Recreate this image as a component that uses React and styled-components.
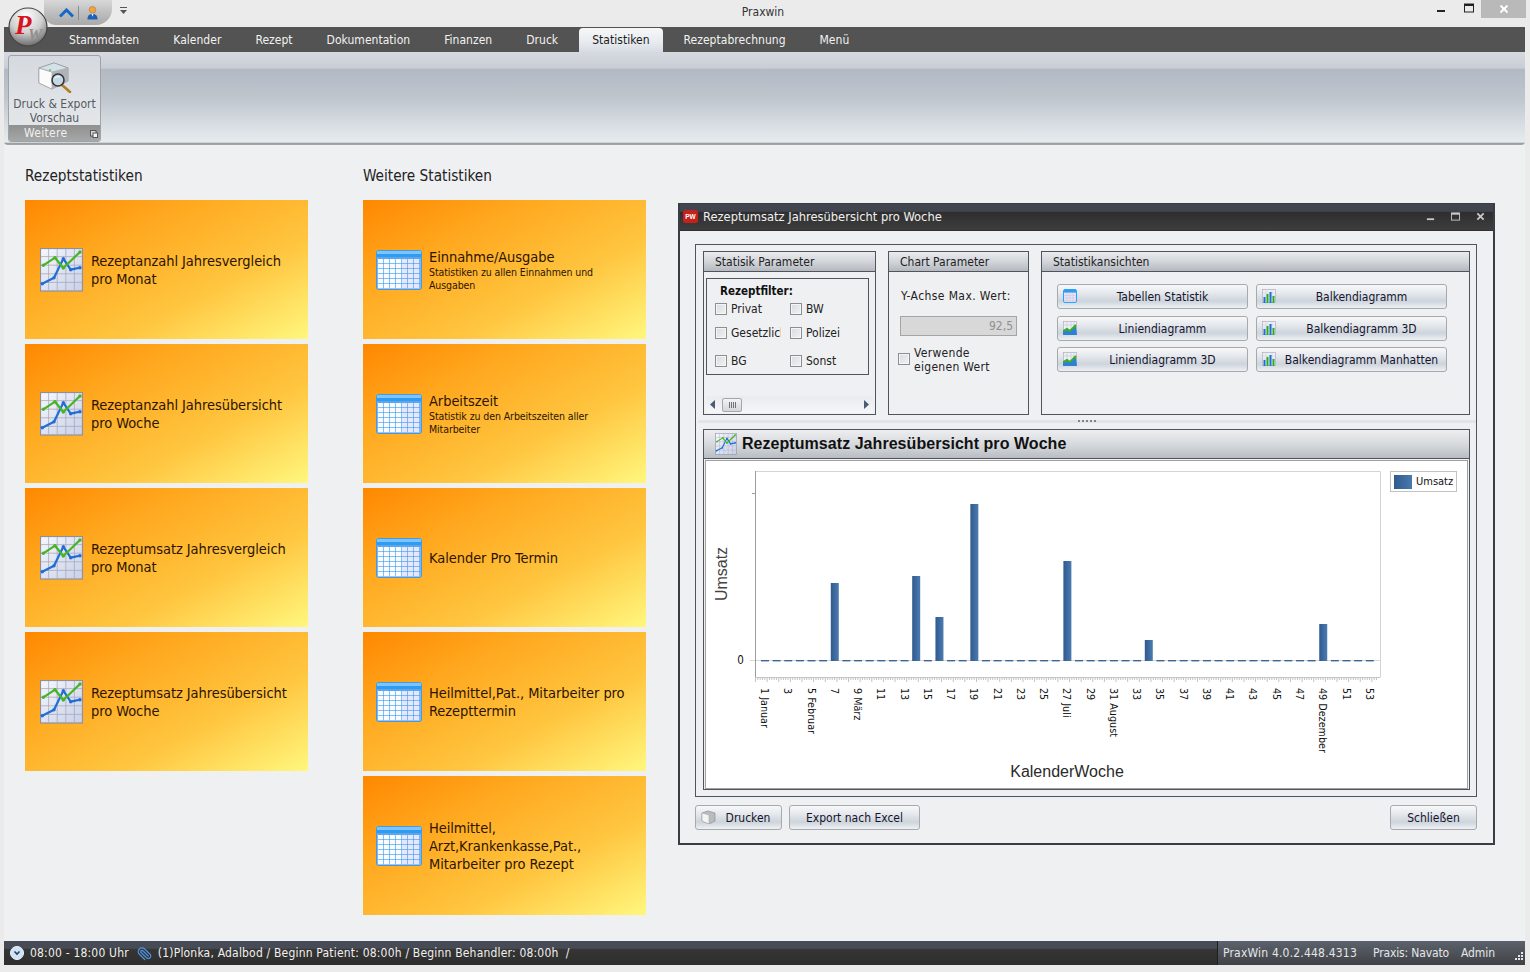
import React from "react";
import styled, { createGlobalStyle } from "styled-components";
import { Paperclip } from "lucide-react";

const GlobalStyle = createGlobalStyle`
  html, body { margin: 0; padding: 0; }
  body {
    font-family: "DejaVu Sans Condensed", "DejaVu Sans", "Noto Sans", sans-serif;
    font-size: 12px;
    color: #1a1a1a;
    background: #ebebeb;
  }
  * { box-sizing: border-box; }
`;

// SHELL

const Shell = styled.div`
  position: relative;
  display: flex;
  flex-direction: column;
  width: 1530px;
  height: 972px;
  overflow: hidden;
  background: #ebebeb;
  padding: 0 5px 7px 4px;
`;

const TitleBar = styled.div`
  display: grid;
  grid-template-columns: 1fr auto 1fr;
  height: 27px;
  margin: 0 -5px 0 -4px;
  background: #ebebeb;
`;

const Orb = styled.div`
  position: absolute;
  left: 8px;
  top: 7px;
  width: 40px;
  height: 40px;
  z-index: 3;
`;

const QuickAccess = styled.div`
  display: flex;
  align-items: flex-start;
  gap: 8px;
  padding-left: 44px;
`;

const QuickPill = styled.div`
  display: flex;
  align-items: center;
  gap: 4px;
  width: 68px;
  height: 25px;
  padding-left: 15px;
  background: linear-gradient(180deg, #d8d8d8 0%, #bcbcbc 55%, #a9a9a9 100%);
  border-radius: 0 0 16px 12px;
`;

const Divider = styled.span`
  width: 1px;
  height: 14px;
  margin-right: 4px;
  background: #8b8b8b;
`;

const QuickMore = styled.div`
  margin-top: 7px;
  line-height: 0;
`;

const AppTitle = styled.div`
  margin-right: 4px;
  padding-top: 5px;
  font-size: 12px;
  color: #333;
`;

const WindowControls = styled.div`
  display: flex;
  justify-content: flex-end;
  align-items: flex-start;
  margin-right: 4px;
`;

const ControlButton = styled.div`
  display: flex;
  justify-content: center;
  align-items: center;
  width: ${props => props.$width}px;
  height: 18px;
  padding-bottom: ${props => (props.$close ? "0" : "2px")};
  background: ${props => (props.$close ? "#b9b9b9" : "transparent")};
  line-height: 0;
`;

// MENU

const MenuBar = styled.nav`
  display: flex;
  gap: 8px;
  height: 25px;
  padding-left: 52px;
  background: #535353;
`;

const MenuItem = styled.div`
  display: flex;
  align-items: center;
  height: ${props => (props.$active ? "24px" : "25px")};
  margin-top: ${props => (props.$active ? "1px" : "0")};
  padding: ${props => (props.$active ? "0 13px" : "1px 13px 0")};
  font-size: 12px;
  letter-spacing: 0.03px;
  color: ${props => (props.$active ? "#1d1d1d" : "#f2f2f2")};
  background: ${props => (props.$active ? "linear-gradient(180deg, #f6f7f8 0%, #e7ebef 60%, #d6dbe2 100%)" : "transparent")};
  border-radius: ${props => (props.$active ? "4px 4px 0 0" : "0")};
`;

const Ribbon = styled.div`
  height: 93px;
  padding: 3px 0 0 4px;
  background: linear-gradient(180deg, #d6dae0 0%, #c9cdd5 17%, #b3b9c3 19%, #c0c6ce 50%, #e6ecee 97%, #9a9d9f 98%, #a5a8aa 100%);
  border-radius: 0 0 4px 4px;
`;

const RibbonGroup = styled.div`
  display: flex;
  flex-direction: column;
  width: 93px;
  height: 87px;
  border: 1px solid #9fa3a8;
  border-radius: 3px;
  overflow: hidden;
  background: linear-gradient(180deg, #d5d8de 0%, #dfe3e7 50%, #e4e8ea 100%);
`;

const RibbonAction = styled.div`
  flex: 1;
  display: flex;
  flex-direction: column;
  align-items: center;
  gap: 4px;
  padding-top: 6px;
  font-size: 12px;
  line-height: 14px;
  color: #555a60;
  text-align: center;
`;

const RibbonCaption = styled.div`
  position: relative;
  height: 16px;
  padding-left: 15px;
  font-size: 12px;
  line-height: 17px;
  letter-spacing: 0.3px;
  color: #f0f0f0;
  background: linear-gradient(180deg, #8f9090 0%, #a6a7a7 100%);
`;

const CaptionMark = styled.span`
  position: absolute;
  right: 2px;
  top: 5px;
  line-height: 0;
`;

// MAIN

const Main = styled.main`
  flex: 1;
  display: flex;
  padding-left: 21px;
  background: #eff0f2;
`;

const TileColumn = styled.section`
  width: 283px;
  margin-right: ${props => props.$gap}px;
`;

const ColumnTitle = styled.h2`
  height: 55px;
  margin: 0;
  padding-top: 21px;
  font-size: 15.2px;
  line-height: 20px;
  font-weight: 400;
  color: #222;
`;

const TileStack = styled.div`
  display: flex;
  flex-direction: column;
  gap: 5px;
`;

const Tile = styled.div`
  display: flex;
  align-items: center;
  gap: ${props => props.$gap}px;
  height: 139px;
  padding-left: ${props => props.$inset}px;
  background: linear-gradient(152deg, #ff8800 0%, #ffa81f 30%, #ffc53f 65%, #fff77e 100%);
`;

const TileText = styled.div`
  flex: 1;
  padding-right: 12px;
`;

const TileTitle = styled.div`
  font-size: 14.5px;
  line-height: 18px;
  letter-spacing: -0.06px;
  color: #2c1400;
`;

const TileNote = styled.div`
  font-size: 10.5px;
  line-height: 13px;
  letter-spacing: -0.09px;
  color: #2c1400;
`;

// WINDOW

const ChildWindow = styled.div`
  display: flex;
  flex-direction: column;
  width: 817px;
  height: 642px;
  margin-top: 58px;
  border: 2px solid #3a3d44;
  border-top-width: 1px;
  background: #eff0f2;
`;

const WindowHeader = styled.div`
  display: flex;
  align-items: center;
  height: 26px;
  padding: 0 0 2px 3px;
  color: #f0f0f0;
  font-size: 12.8px;
  background: linear-gradient(180deg, #41454f 0%, #41454f 28%, #2e2e2e 32%, #3e3e3e 100%);
  flex-shrink: 0;
`;

const WindowName = styled.span`
  flex: 1;
  margin-left: 5px;
`;

const HeaderButton = styled.span`
  display: flex;
  justify-content: center;
  width: 25px;
  line-height: 0;
`;

const WindowBody = styled.div`
  flex: 1;
  padding: 13px 16px 0 15px;
  border-top: 1px solid #2f2f2f;
`;

const Frame = styled.div`
  height: 553px;
  padding: 6px 6px 6px 7px;
  border: 1px solid #50545c;
`;

const PanelRow = styled.div`
  display: grid;
  grid-template-columns: 173px 141px 429px;
  gap: 12px;
  height: 164px;
`;

const Panel = styled.div`
  display: flex;
  flex-direction: column;
  min-width: 0;
  border: 1px solid #50545c;
`;

const PanelHeader = styled.div`
  height: 20px;
  padding-left: 11px;
  font-size: 12px;
  line-height: 21px;
  color: #222;
  background: linear-gradient(180deg, #e9ebee 0%, #d2d5da 50%, #b5b9bf 100%);
  border-bottom: 1px solid #50545c;
`;

const PanelBody = styled.div`
  flex: 1;
  display: flex;
  flex-direction: column;
  min-height: 0;
  padding: ${props => props.$pad};
`;

const FilterBox = styled.div`
  height: 97px;
  flex-shrink: 0;
  padding: 5px 0 0 8px;
  border: 1px solid #50545c;
`;

const FilterTitle = styled.div`
  padding-left: 5px;
  font-size: 11.5px;
  line-height: 14px;
  font-weight: 700;
  color: #111;
`;

const FilterGrid = styled.div`
  display: grid;
  grid-template-columns: 75px 60px;
  grid-template-rows: 24px 24px 32px;
  margin-top: -1px;
`;

const CheckRow = styled.label`
  display: flex;
  align-items: ${props => (props.$top ? "flex-start" : "center")};
  gap: 4px;
  min-width: 0;
  margin-left: ${props => props.$shift || 0}px;
  font-size: 12px;
  line-height: 14px;
  letter-spacing: ${props => (props.$top ? "0.3px" : "0")};
  color: #222;
  white-space: nowrap;
  overflow: hidden;
`;

const CheckBox = styled.span`
  flex-shrink: 0;
  width: 12px;
  height: 12px;
  margin-top: ${props => (props.$top ? "7px" : "0")};
  border: 1px solid #8b8f95;
  background: linear-gradient(135deg, #d9dbde 0%, #f1f2f3 100%);
  box-shadow: inset 0 0 0 1px #f5f5f5;
`;

const ClipText = styled.span`
  width: 50px;
  overflow: hidden;
`;

const ScrollBar = styled.div`
  display: flex;
  align-items: center;
  justify-content: space-between;
  height: 17px;
  margin: 21px -4px 0 0;
  padding: 0 4px 0 4px;
  background: linear-gradient(180deg, #e9ebee 0%, #f5f6f7 100%);
`;

const ScrollThumb = styled.span`
  display: flex;
  align-items: center;
  justify-content: center;
  gap: 1px;
  width: 20px;
  height: 14px;
  margin: 0 auto 0 7px;
  border: 1px solid #a3a6aa;
  border-radius: 2px;
  background: linear-gradient(180deg, #f2f3f4 0%, #d3d6da 100%);
`;

const Grip = styled.i`
  width: 1px;
  height: 6px;
  background: #6f7277;
`;

const FieldLabel = styled.div`
  font-size: 12px;
  line-height: 14px;
  letter-spacing: 0.4px;
  color: #222;
`;

const ValueField = styled.div`
  width: 117px;
  height: 20px;
  margin: 13px 0 10px -1px;
  padding-right: 3px;
  text-align: right;
  font-size: 12px;
  line-height: 18px;
  color: #909090;
  background: #d8d8d8;
  border: 1px solid #a5a5a5;
`;

const ViewGrid = styled.div`
  display: grid;
  grid-template-columns: 191px 191px;
  grid-template-rows: 25px 24px 25px;
  column-gap: 8px;
  row-gap: 7px;
`;

const Btn = styled.button`
  position: relative;
  display: flex;
  align-items: center;
  justify-content: center;
  width: ${props => (props.$width ? `${props.$width}px` : "100%")};
  height: 25px;
  padding: 0 0 0 ${props => props.$inset || 0}px;
  font-family: inherit;
  font-size: 12px;
  color: #14142e;
  border: 1px solid #a6a9ae;
  border-radius: 3px;
  background: linear-gradient(180deg, #f7f8f9 0%, #e5e8ec 35%, #cdd4dc 70%, #eef1f3 100%);
`;

const BtnIcon = styled.span`
  position: absolute;
  left: 5px;
  top: 4px;
  line-height: 0;
`;

const Splitter = styled.div`
  display: flex;
  justify-content: center;
  height: 14px;
  padding-top: 5px;
  margin: 0 -6px 0 -5px;
`;

const SplitLine = styled.div`
  display: flex;
  justify-content: center;
  gap: 2px;
  width: 100%;
  height: 3px;
  background: #e2e4e7;
`;

const SplitDot = styled.i`
  width: 2px;
  height: 2px;
  background: #80848a;
`;

const ChartPanel = styled.div`
  width: 767px;
  height: 361px;
  border: 1px solid #50545c;
`;

const ChartHeader = styled.div`
  display: flex;
  align-items: center;
  gap: 5px;
  height: 29px;
  padding-left: 11px;
  font-family: "Liberation Sans", Arial, sans-serif;
  font-size: 16px;
  letter-spacing: 0.05px;
  font-weight: 700;
  color: #111;
  background: linear-gradient(180deg, #eceef0 0%, #d7dadd 50%, #b9bdc3 100%);
  border-bottom: 1px solid #50545c;
`;

const ChartBox = styled.div`
  position: relative;
  height: 329px;
  margin: 1px 1px 0;
  border: 1px solid #a2a2a2;
  background: #fff;
  overflow: hidden;
`;

const ChartDrawing = styled.svg`
  display: block;
`;

const Legend = styled.div`
  position: absolute;
  left: 684px;
  top: 10px;
  display: flex;
  align-items: center;
  gap: 4px;
  width: 67px;
  height: 21px;
  padding-left: 3px;
  font-size: 11px;
  color: #111;
  background: #fff;
  border: 1px solid #c2c2c2;
`;

const LegendSwatch = styled.span`
  width: 18px;
  height: 14px;
  background: linear-gradient(90deg, #2f5b8f 0%, #4a79ae 100%);
`;

const WindowFooter = styled.div`
  display: flex;
  gap: 7px;
  margin-top: 8px;
`;

const FooterEnd = styled.div`
  margin-left: auto;
`;

// STATUS

const StatusBar = styled.footer`
  display: flex;
  height: 24px;
  color: #f0f0f0;
  font-size: 12px;
  background: linear-gradient(180deg, #474b55 0%, #474b55 30%, #353535 36%, #2e2e2e 100%);
`;

const StatusLeft = styled.div`
  flex: 1;
  display: flex;
  align-items: center;
  gap: 6px;
  padding-left: 6px;
`;

const StatusRight = styled.div`
  position: relative;
  display: flex;
  align-items: center;
  width: 308px;
  padding-left: 5px;
  color: #e4e6e8;
  background: linear-gradient(180deg, #5c626c 0%, #4b4f55 60%, #3f4246 100%);
  border-left: 1px solid #1f1f1f;
`;

const StatusItem = styled.span`
  margin-right: ${props => props.$gap}px;
  letter-spacing: ${props => props.$spacing}px;
  white-space: pre;
`;

const Clip = styled(Paperclip)`
  transform: rotate(90deg);
  margin-left: 1px;
  flex-shrink: 0;
`;

const Resize = styled.span`
  position: absolute;
  right: 1px;
  bottom: 3px;
  line-height: 0;
`;

// ICONS

const OrbLogo = () => (
  <svg width="40" height="40" viewBox="0 0 40 40">
    <defs>
      <radialGradient id="orbFill" cx="45%" cy="22%" r="85%">
        <stop offset="0%" stopColor="#ffffff" />
        <stop offset="50%" stopColor="#d0d0d0" />
        <stop offset="100%" stopColor="#5a5a5a" />
      </radialGradient>
    </defs>
    <circle cx="20" cy="20" r="19" fill="url(#orbFill)" stroke="#444" strokeWidth="1.2" />
    <text x="20" y="33" fontFamily="Liberation Serif" fontStyle="italic" fontWeight="700" fontSize="16" fill="#8f8f8f">W</text>
    <text x="7" y="27" fontFamily="Liberation Serif" fontStyle="italic" fontWeight="700" fontSize="27" fill="#d8141f">P</text>
  </svg>
);

const ChevronUp = () => (
  <svg width="15" height="10" viewBox="0 0 15 10">
    <path d="M1 8.5 L7.5 2 L14 8.5" fill="none" stroke="#1668c8" strokeWidth="3" />
  </svg>
);

const PersonIcon = () => (
  <svg width="11" height="15" viewBox="0 0 12 15">
    <path d="M0.5 15 C0.5 10.5 2.5 9 6 9 C9.5 9 11.5 10.5 11.5 15 Z" fill="#1c62b8" />
    <circle cx="6" cy="4.5" r="3.6" fill="#eda347" stroke="#a86a1c" strokeWidth="0.5" />
    <path d="M5 9 L7 9 L6 12 Z" fill="#ffffff" />
  </svg>
);

const MoreArrow = () => (
  <svg width="7" height="7" viewBox="0 0 7 7">
    <rect x="0" y="0" width="7" height="1" fill="#555" />
    <path d="M0 3 L7 3 L3.5 7 Z" fill="#555" />
  </svg>
);

const MinGlyph = ({ color, size }) => (
  <svg width={size} height={size} viewBox="0 0 10 10">
    <rect x="1" y="7" width="8" height="2" fill={color} />
  </svg>
);

const MaxGlyph = ({ color, size }) => (
  <svg width={size} height={size} viewBox="0 0 10 10">
    <rect x="0.5" y="1" width="9" height="8" fill="none" stroke={color} strokeWidth="1" />
    <rect x="0.5" y="1" width="9" height="2" fill={color} />
  </svg>
);

const CloseGlyph = ({ color, size }) => (
  <svg width={size} height={size} viewBox="0 0 10 10">
    <path d="M1.5 1.5 L8.5 8.5 M8.5 1.5 L1.5 8.5" stroke={color} strokeWidth="2" />
  </svg>
);

const DialogMark = () => (
  <svg width="8" height="8" viewBox="0 0 8 8">
    <rect x="0.5" y="0.5" width="5.5" height="5.5" fill="#d8d8d8" stroke="#555" />
    <rect x="3" y="3" width="4.5" height="4.5" fill="#f4f4f4" stroke="#555" />
  </svg>
);

const PrinterIcon = () => (
  <svg width="34" height="31" viewBox="0 0 34 31">
    <path d="M1 6 L16 1 L30 6 L30 19 L14 27 L1 21 Z" fill="#e9e9e9" stroke="#8b8b8b" strokeWidth="0.8" />
    <path d="M1 6 L14 10 L14 27 L1 21 Z" fill="#fbfbfb" stroke="#9a9a9a" strokeWidth="0.6" />
    <path d="M14 10 L30 6 L16 1 L1 6 Z" fill="#d3e2e8" stroke="#8b8b8b" strokeWidth="0.5" />
    <path d="M14 10 L30 6 L30 19 L14 27 Z" fill="#aeb3b8" />
    <circle cx="12" cy="8" r="1" fill="#58c060" />
    <path d="M24 23 L32 30" stroke="#b27c22" strokeWidth="2.6" strokeLinecap="round" />
    <circle cx="20" cy="18" r="6" fill="#c5d8e4" stroke="#33363b" strokeWidth="1.6" />
    <path d="M17 16 Q19 14 22 15" stroke="#ffffff" strokeWidth="1" fill="none" />
  </svg>
);

const bluePoints = [[2.3, 35.7], [14, 29.7], [23.3, 10.7], [30.7, 21.7], [40, 19.7]];
const greenPoints = [[3.3, 17.3], [15, 9.7], [23.3, 20], [40, 4]];

const ChartIcon = ({ width, height }) => {
  const lines = [8.6, 17.2, 25.8, 34.4];
  return (
    <svg width={width} height={height} viewBox="0 0 43 44">
      <defs>
        <linearGradient id="chartBg" x1="0" y1="0" x2="1" y2="1">
          <stop offset="0%" stopColor="#f7f8fc" />
          <stop offset="100%" stopColor="#c8cfe8" />
        </linearGradient>
      </defs>
      <rect x="0.5" y="0.5" width="42" height="42.5" fill="url(#chartBg)" stroke="#8e8fa0" strokeWidth="1.2" />
      {lines.map(p => (
        <g key={p} stroke="#a7aabb" strokeWidth="0.8">
          <path d={`M${p} 1 V43`} />
          <path d={`M1 ${p} H42`} />
        </g>
      ))}
      <polyline points={bluePoints.join(" ")} fill="none" stroke="#1f6ed8" strokeWidth="2.2" strokeLinejoin="round" />
      {bluePoints.map(([x, y]) => <circle key={x} cx={x} cy={y} r="1.7" fill="#1f6ed8" />)}
      <polyline points={greenPoints.join(" ")} fill="none" stroke="#45b522" strokeWidth="2.2" strokeLinejoin="round" />
      {greenPoints.map(([x, y]) => <circle key={x} cx={x} cy={y} r="1.7" fill="#45b522" />)}
    </svg>
  );
};

const CalendarIcon = ({ width, height }) => {
  const cols = [0, 1, 2, 3, 4, 5, 6];
  const rows = [0, 1, 2, 3, 4, 5];
  return (
    <svg width={width} height={height} viewBox="0 0 46 40">
      <rect x="0.5" y="0.5" width="45" height="39" rx="2" fill="#2f9bf2" stroke="#3b9cf0" />
      <rect x="1" y="1" width="44" height="3" fill="#7cc4fa" />
      {rows.map(r =>
        cols.map(c => (
          <rect key={`${r}-${c}`} x={2 + c * 6} y={9 + r * 5} width="5.4" height="4.4" fill={c > 3 ? "#e8e6fb" : "#fbfbff"} />
        ))
      )}
      <rect x="1.5" y="8" width="43" height="30.5" fill="none" stroke="#c6c4d8" strokeWidth="0.6" />
    </svg>
  );
};

const SmallCalendar = () => (
  <svg width="14" height="14" viewBox="0 0 14 14">
    <rect x="0.5" y="0.5" width="13" height="13" rx="1.5" fill="#e6e4f8" stroke="#2aa0ff" />
    <rect x="1" y="1" width="12" height="2.6" fill="#2f9bf2" />
    <path d="M1 6.5 H13 M1 9 H13 M1 11.5 H13 M4 4 V13 M7 4 V13 M10 4 V13" stroke="#c9c7dc" strokeWidth="0.6" />
  </svg>
);

const SmallLines = () => (
  <svg width="14" height="14" viewBox="0 0 14 14">
    <rect x="0.5" y="0.5" width="13" height="13" fill="#efeff6" stroke="#a5a7b2" strokeWidth="0.6" />
    <path d="M4 1 V14 M8 1 V14 M11 1 V14 M1 4 H13" stroke="#c0c2cc" strokeWidth="0.6" />
    <path d="M0 10 L4 9 L7 10 L13 5 L14 14 L0 14 Z" fill="#2f7fd6" />
    <path d="M0 10 L4 8 L7 10 L13 4" fill="none" stroke="#35b11f" strokeWidth="2" />
  </svg>
);

const SmallBars = () => (
  <svg width="14" height="14" viewBox="0 0 14 14">
    <rect x="0.5" y="0.5" width="13" height="13" fill="#efeff6" stroke="#a5a7b2" strokeWidth="0.6" />
    <path d="M1 4 H13 M1 7 H13 M4 1 V14 M10 1 V14" stroke="#c6c8d2" strokeWidth="0.5" />
    <rect x="1.5" y="8" width="2" height="6" fill="#1f6ed8" />
    <rect x="4.5" y="5" width="2" height="9" fill="#2bab22" />
    <rect x="7.5" y="3" width="2" height="11" fill="#1f6ed8" />
    <rect x="10.5" y="7" width="2" height="7" fill="#2bab22" />
  </svg>
);

const BoxIcon = () => (
  <svg width="16" height="14" viewBox="0 0 16 14">
    <path d="M1 3 L7 1 L14 3 L14 11 L8 14 L1 11 Z" fill="#b9bcbf" stroke="#8f8f8f" strokeWidth="0.7" />
    <path d="M1 3 L8 5 L8 14 L1 11 Z" fill="#f4f4f4" stroke="#a9a9a9" strokeWidth="0.6" />
  </svg>
);

const PwBadge = () => (
  <svg width="15" height="15" viewBox="0 0 15 15">
    <rect x="0" y="1" width="15" height="13" rx="2.5" fill="#c4201c" />
    <text x="7.5" y="10" textAnchor="middle" fontFamily="Liberation Sans" fontWeight="700" fontSize="6.5" fill="#fff">PW</text>
  </svg>
);

const ClockIcon = () => (
  <svg width="14" height="14" viewBox="0 0 14 14">
    <circle cx="7" cy="7" r="6.5" fill="#cfe3f5" stroke="#eef5fb" strokeWidth="1" />
    <path d="M4.5 5.5 L7 8 L9.5 5.5" fill="none" stroke="#20406c" strokeWidth="1.6" />
  </svg>
);

const ScrollArrow = ({ dir }) => (
  <svg width="5" height="9" viewBox="0 0 5 9">
    <path d={dir === "left" ? "M5 0 L0 4.5 L5 9 Z" : "M0 0 L5 4.5 L0 9 Z"} fill="#4d5a75" />
  </svg>
);

const ResizeGrip = () => (
  <svg width="11" height="11" viewBox="0 0 11 11">
    {[[8, 1], [8, 4], [5, 4], [8, 7], [5, 7], [2, 7]].map(([x, y]) => (
      <rect key={`${x}-${y}`} x={x} y={y} width="2" height="2" fill="#e5e5e5" />
    ))}
  </svg>
);

// CHART

// viewBox uses the page's own pixel coordinates, so the axis numbers read off the screenshot directly
const weekX = week => 765 + (week - 1) * 11.63;
const baseline = 660;
const barTops = { 7: 583, 14: 576, 16: 617, 19: 504, 27: 561, 34: 640, 49: 624 };
const monthNames = { 1: "Januar", 5: "Februar", 9: "März", 27: "Juli", 31: "August", 49: "Dezember" };
const weeks = Array.from({ length: 53 }, (_, i) => i + 1);
const tickRule = Array.from({ length: 268 }, (_, i) => i);

const WeekChart = () => (
  <ChartDrawing width="761" height="327" viewBox="706 461 761 327">
    <defs>
      <linearGradient id="barFill" x1="0" y1="0" x2="1" y2="0">
        <stop offset="0%" stopColor="#2f5a8e" />
        <stop offset="100%" stopColor="#4c7bb0" />
      </linearGradient>
    </defs>
    <path d="M755.5 471.5 H1380.5 V677.5" fill="none" stroke="#d4d4d4" />
    <path d="M750 660.5 H1380" stroke="#d8d8d8" />
    <path d="M755.5 471 V678" stroke="#9c9c9c" />
    <path d="M755 677.5 H1380" stroke="#c4c4c4" />
    <path d="M752 493.5 H755" stroke="#9c9c9c" />
    {tickRule.map(i => {
      const x = 755.5 + i * 2.326;
      return <path key={i} d={`M${x} 678 V${i % 5 === 0 ? 682 : 680}`} stroke="#a8a8a8" strokeWidth="0.7" />;
    })}
    {weeks.map(week =>
      barTops[week] ? (
        <rect key={week} x={weekX(week) - 4} y={barTops[week]} width="8" height={baseline + 1 - barTops[week]} fill="url(#barFill)" />
      ) : (
        <rect key={week} x={weekX(week) - 4} y={baseline} width="8" height="1.4" fill="#3a6597" />
      )
    )}
    {weeks.filter(week => week % 2 === 1).map(week => (
      <text
        key={week}
        transform={`translate(${weekX(week) - 4} 688) rotate(90)`}
        fontFamily="DejaVu Sans Condensed, DejaVu Sans, sans-serif"
        fontSize="10.7"
        fill="#111"
      >
        {monthNames[week] ? `${week} ${monthNames[week]}` : week}
      </text>
    ))}
    <text x="740.5" y="664" textAnchor="middle" fontFamily="DejaVu Sans Condensed, DejaVu Sans, sans-serif" fontSize="11.5" fill="#111">0</text>
    <text transform="translate(727 574) rotate(-90)" textAnchor="middle" fontFamily="Liberation Sans, sans-serif" fontSize="16" fill="#444">Umsatz</text>
    <text x="1067" y="777" textAnchor="middle" fontFamily="Liberation Sans, sans-serif" fontSize="16" fill="#2a2a2a">KalenderWoche</text>
  </ChartDrawing>
);

// DATA

const menuItems = ["Stammdaten", "Kalender", "Rezept", "Dokumentation", "Finanzen", "Druck", "Statistiken", "Rezeptabrechnung", "Menü"];

const rezeptTiles = [
  ["Rezeptanzahl Jahresvergleich", "pro Monat"],
  ["Rezeptanzahl Jahresübersicht", "pro Woche"],
  ["Rezeptumsatz Jahresvergleich", "pro Monat"],
  ["Rezeptumsatz Jahresübersicht", "pro Woche"],
];

const weitereTiles = [
  { title: ["Einnahme/Ausgabe"], note: ["Statistiken zu allen Einnahmen und", "Ausgaben"] },
  { title: ["Arbeitszeit"], note: ["Statistik zu den Arbeitszeiten aller", "Mitarbeiter"] },
  { title: ["Kalender Pro Termin"] },
  { title: ["Heilmittel,Pat., Mitarbeiter pro", "Rezepttermin"] },
  { title: ["Heilmittel,", "Arzt,Krankenkasse,Pat.,", "Mitarbeiter pro Rezept"] },
];

const viewButtons = [
  ["Tabellen Statistik", SmallCalendar],
  ["Balkendiagramm", SmallBars],
  ["Liniendiagramm", SmallLines],
  ["Balkendiagramm 3D", SmallBars],
  ["Liniendiagramm 3D", SmallLines],
  ["Balkendiagramm Manhatten", SmallBars],
];

const App = () => (
  <>
    <GlobalStyle />
    <Shell>
      <Orb><OrbLogo /></Orb>
      <TitleBar>
        <QuickAccess>
          <QuickPill>
            <ChevronUp />
            <Divider />
            <PersonIcon />
          </QuickPill>
          <QuickMore><MoreArrow /></QuickMore>
        </QuickAccess>
        <AppTitle>Praxwin</AppTitle>
        <WindowControls>
          <ControlButton $width={30}><MinGlyph color="#222" size={10} /></ControlButton>
          <ControlButton $width={25}><MaxGlyph color="#222" size={10} /></ControlButton>
          <ControlButton $width={45} $close><CloseGlyph color="#fff" size={10} /></ControlButton>
        </WindowControls>
      </TitleBar>

      <MenuBar>
        {menuItems.map(item => (
          <MenuItem key={item} $active={item === "Statistiken"}>{item}</MenuItem>
        ))}
      </MenuBar>

      <Ribbon>
        <RibbonGroup>
          <RibbonAction>
            <PrinterIcon />
            <span>Druck &amp; Export<br />Vorschau</span>
          </RibbonAction>
          <RibbonCaption>Weitere<CaptionMark><DialogMark /></CaptionMark></RibbonCaption>
        </RibbonGroup>
      </Ribbon>

      <Main>
        <TileColumn $gap={55}>
          <ColumnTitle>Rezeptstatistiken</ColumnTitle>
          <TileStack>
            {rezeptTiles.map(lines => (
              <Tile key={lines[0]} $inset={15} $gap={8}>
                <ChartIcon width={43} height={44} />
                <TileText>
                  {lines.map(line => <TileTitle key={line}>{line}</TileTitle>)}
                </TileText>
              </Tile>
            ))}
          </TileStack>
        </TileColumn>

        <TileColumn $gap={32}>
          <ColumnTitle>Weitere Statistiken</ColumnTitle>
          <TileStack>
            {weitereTiles.map(tile => (
              <Tile key={tile.title[0]} $inset={13} $gap={7}>
                <CalendarIcon width={46} height={40} />
                <TileText>
                  {tile.title.map(line => <TileTitle key={line}>{line}</TileTitle>)}
                  {tile.note && tile.note.map(line => <TileNote key={line}>{line}</TileNote>)}
                </TileText>
              </Tile>
            ))}
          </TileStack>
        </TileColumn>

        <ChildWindow>
          <WindowHeader>
            <PwBadge />
            <WindowName>Rezeptumsatz Jahresübersicht pro Woche</WindowName>
            <HeaderButton><MinGlyph color="#c8c8c8" size={9} /></HeaderButton>
            <HeaderButton><MaxGlyph color="#c8c8c8" size={9} /></HeaderButton>
            <HeaderButton><CloseGlyph color="#c8c8c8" size={9} /></HeaderButton>
          </WindowHeader>
          <WindowBody>
            <Frame>
              <PanelRow>
                <Panel>
                  <PanelHeader>Statisik Parameter</PanelHeader>
                  <PanelBody $pad="6px 6px 0 2px">
                    <FilterBox>
                      <FilterTitle>Rezeptfilter:</FilterTitle>
                      <FilterGrid>
                        <CheckRow><CheckBox />Privat</CheckRow>
                        <CheckRow><CheckBox />BW</CheckRow>
                        <CheckRow><CheckBox /><ClipText>Gesetzlich</ClipText></CheckRow>
                        <CheckRow><CheckBox />Polizei</CheckRow>
                        <CheckRow><CheckBox />BG</CheckRow>
                        <CheckRow><CheckBox />Sonst</CheckRow>
                      </FilterGrid>
                    </FilterBox>
                    <ScrollBar>
                      <ScrollArrow dir="left" />
                      <ScrollThumb><Grip /><Grip /><Grip /><Grip /></ScrollThumb>
                      <ScrollArrow dir="right" />
                    </ScrollBar>
                  </PanelBody>
                </Panel>

                <Panel>
                  <PanelHeader>Chart Parameter</PanelHeader>
                  <PanelBody $pad="17px 0 0 12px">
                    <FieldLabel>Y-Achse Max. Wert:</FieldLabel>
                    <ValueField>92,5</ValueField>
                    <CheckRow $top $shift={-3}>
                      <CheckBox $top />
                      <span>Verwende<br />eigenen Wert</span>
                    </CheckRow>
                  </PanelBody>
                </Panel>

                <Panel>
                  <PanelHeader>Statistikansichten</PanelHeader>
                  <PanelBody $pad="12px 0 0 15px">
                    <ViewGrid>
                      {viewButtons.map(([label, Icon]) => (
                        <Btn key={label} $inset={20}>
                          <BtnIcon><Icon /></BtnIcon>
                          {label}
                        </Btn>
                      ))}
                    </ViewGrid>
                  </PanelBody>
                </Panel>
              </PanelRow>

              <Splitter>
                <SplitLine>
                  <SplitDot /><SplitDot /><SplitDot /><SplitDot /><SplitDot />
                </SplitLine>
              </Splitter>

              <ChartPanel>
                <ChartHeader>
                  <ChartIcon width={22} height={22} />
                  Rezeptumsatz Jahresübersicht pro Woche
                </ChartHeader>
                <ChartBox>
                  <WeekChart />
                  <Legend><LegendSwatch />Umsatz</Legend>
                </ChartBox>
              </ChartPanel>
            </Frame>

            <WindowFooter>
              <Btn $width={87} $inset={19}>
                <BtnIcon><BoxIcon /></BtnIcon>
                Drucken
              </Btn>
              <Btn $width={131}>Export nach Excel</Btn>
              <FooterEnd><Btn $width={87}>Schließen</Btn></FooterEnd>
            </WindowFooter>
          </WindowBody>
        </ChildWindow>
      </Main>

      <StatusBar>
        <StatusLeft>
          <ClockIcon />
          <StatusItem $gap={1} $spacing={0.19}>08:00 - 18:00 Uhr</StatusItem>
          <Clip size={15} color="#4f8fd8" />
          <StatusItem $gap={0} $spacing={0.19}>(1)Plonka, Adalbod / Beginn Patient: 08:00h / Beginn Behandler: 08:00h  /</StatusItem>
        </StatusLeft>
        <StatusRight>
          <StatusItem $gap={16} $spacing={0.19}>PraxWin 4.0.2.448.4313</StatusItem>
          <StatusItem $gap={12} $spacing={-0.14}>Praxis: Navato</StatusItem>
          <StatusItem $gap={0} $spacing={-0.1}>Admin</StatusItem>
          <Resize><ResizeGrip /></Resize>
        </StatusRight>
      </StatusBar>
    </Shell>
  </>
);

export default App;
